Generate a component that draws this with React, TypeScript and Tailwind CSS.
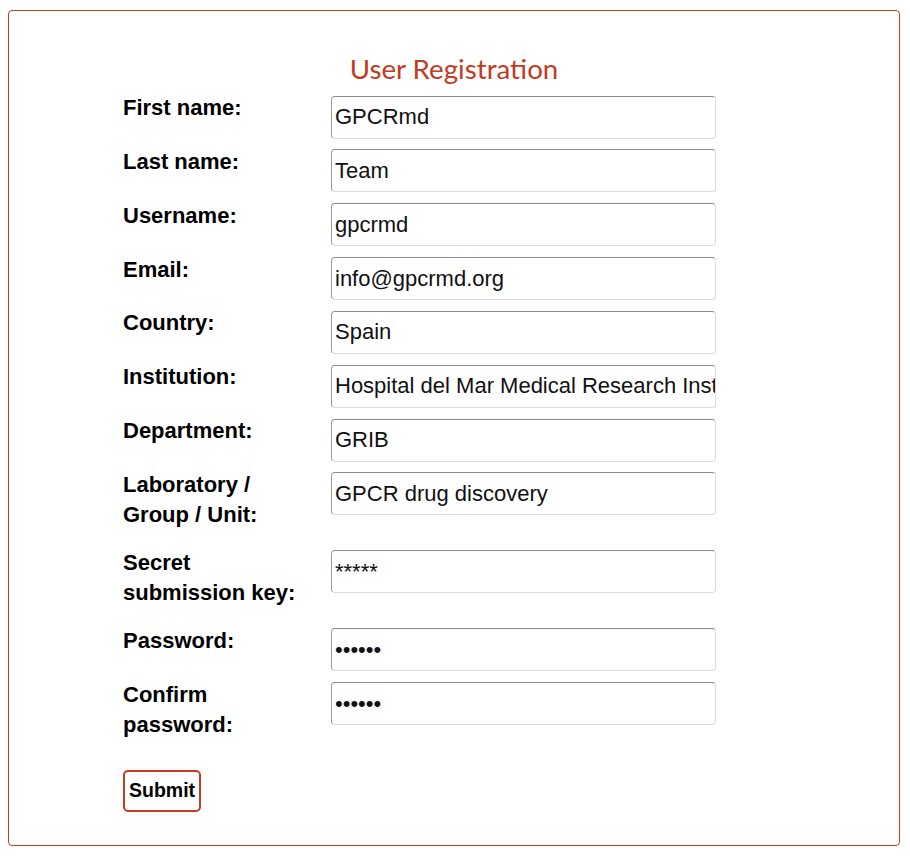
import React from "react";

type Field = { label: string[]; value: string; type?: string };

const FIELDS: Field[] = [
  { label: ["First name:"], value: "GPCRmd" },
  { label: ["Last name:"], value: "Team" },
  { label: ["Username:"], value: "gpcrmd" },
  { label: ["Email:"], value: "info@gpcrmd.org" },
  { label: ["Country:"], value: "Spain" },
  { label: ["Institution:"], value: "Hospital del Mar Medical Research Institute (IMIM)" },
  { label: ["Department:"], value: "GRIB" },
  { label: ["Laboratory /", "Group / Unit:"], value: "GPCR drug discovery" },
  { label: ["Secret", "submission key:"], value: "*****" },
  { label: ["Password:"], value: "gpcrmd", type: "password" },
  { label: ["Confirm", "password:"], value: "gpcrmd", type: "password" },
];

export default function App() {
  return (
    <div className="bg-white pl-2 pr-[10px] pt-[10px] pb-2" style={{ fontFamily: "'Liberation Sans', Arial, sans-serif" }}>
      <div className="border border-[#c23b22] rounded-[4px] h-[836px] pt-[42px] pl-[114px]">
        {/* Title */}
        <h1
          className="text-center text-[27.7px] leading-[31px] text-[#c23b22] -ml-[114px] mb-[9px]"
          style={{ fontFamily: "Lato, 'Liberation Sans', sans-serif" }}
        >
          User Registration
        </h1>

        <form>
          {FIELDS.map((f) => (
            <div key={f.label.join(" ")} className="flex items-start">
              <label className="w-[208px] shrink-0 pb-[17px] text-[22px] leading-[30.5px] font-bold text-black">
                {f.label.map((l, i) => (
                  <span key={i} className="block">{l}</span>
                ))}
              </label>
              <input
                type={f.type ?? "text"}
                defaultValue={f.value}
                readOnly
                className="w-[385px] h-[43px] mt-[2.5px] mb-[8.35px] pl-[3px] pr-0 text-[22px] text-[#111] bg-white rounded-[4px] border border-t-[#8c8c8c] border-l-[#9a9a9a] border-r-[#dcdcdc] border-b-[#dcdcdc] outline-none"
              />
            </div>
          ))}

          <button
            type="button"
            className="mt-[12px] h-[42px] px-[4px] border-2 border-[#c23b22] rounded-[5px] bg-white text-[19.5px] font-bold text-black"
          >
            Submit
          </button>
        </form>
      </div>
    </div>
  );
}
